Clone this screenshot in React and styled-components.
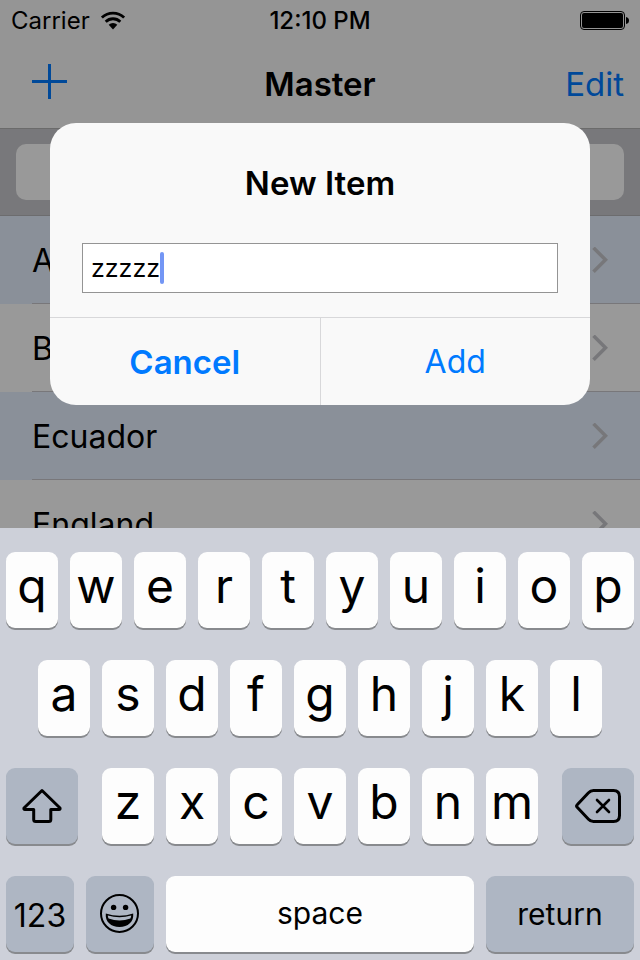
import React, { useState } from "react";
import styled, { createGlobalStyle } from "styled-components";

const GlobalStyle = createGlobalStyle`
  *, *::before, *::after { box-sizing: border-box; }
  body {
    margin: 0;
    font-family: Inter, "Liberation Sans", sans-serif;
    color: #000;
  }
  button, input { font: inherit; color: inherit; }
  button { border: 0; padding: 0; background: none; cursor: pointer; }
`;

const Screen = styled.div`
  display: flex;
  flex-direction: column;
  height: 100vh;
  overflow: hidden;
  background: #fff;
`;

const Stage = styled.div`
  position: relative;
  flex: 1;
  min-height: 0;
  overflow: hidden;
`;

const TopBars = styled.header`
  background: #f8f8f8;
  border-bottom: 1px solid #b2b2b2;
`;

const StatusBar = styled.div`
  display: grid;
  grid-template-columns: 1fr auto 1fr;
  align-items: center;
  height: 40px;
  padding: 0 11px;
  font-size: 24px;
`;

const Carrier = styled.div`
  display: flex;
  align-items: center;
  gap: 11px;
`;

const Clock = styled.div`
  font-weight: 500;
`;

const BatteryIcon = styled.svg`
  justify-self: end;
`;

const NavBar = styled.div`
  display: grid;
  grid-template-columns: 1fr auto 1fr;
  align-items: center;
  height: 88px;
  padding: 0 16px;
`;

const NavTitle = styled.h1`
  margin: 0;
  font-size: 33px;
  font-weight: 600;
`;

const NavButton = styled.button`
  justify-self: end;
  color: #007aff;
  font-size: 33px;
  line-height: 40px;
`;

const AddButton = styled(NavButton)`
  justify-self: start;
  padding: 0 16px 5px;

  svg { display: block; }
`;

const SearchBar = styled.div`
  display: flex;
  padding: 15px 16px;
  background: #c9c9ce;
  border-bottom: 1px solid #b4b4b8;
`;

const SearchField = styled.input`
  flex: 1;
  height: 56px;
  border: 0;
  border-radius: 10px;
  padding: 0 16px;
  background: #fff;
  appearance: none;
  font-size: 28px;
`;

const List = styled.ul`
  list-style: none;
  margin: 0;
  padding: 0;
`;

const ListRow = styled.li`
  display: flex;
  height: 88px;
  padding-left: 32px;
  background: ${(p) => (p.$tinted ? "#e6f1ff" : "#fff")};
`;

const RowBody = styled.div`
  flex: 1;
  display: flex;
  align-items: center;
  justify-content: space-between;
  padding: 2px 32px 0 0;
  border-bottom: 1px solid #c8c7cc;
  font-size: 32px;
`;

const Backdrop = styled.div`
  position: absolute;
  inset: 0;
  display: flex;
  align-items: center;
  justify-content: center;
  padding: 0 50px;
  background: rgba(0, 0, 0, 0.4);
`;

const Dialog = styled.form`
  flex: 1;
  max-width: 540px;
  border-radius: 26px;
  overflow: hidden;
  background: #f9f9f9;
`;

const DialogTitle = styled.h2`
  margin: 0;
  padding: 40px 32px;
  font-size: 33px;
  line-height: 40px;
  font-weight: 600;
  text-align: center;
`;

const TextBox = styled.label`
  display: flex;
  align-items: center;
  height: 50px;
  margin: 0 32px 24px;
  padding: 0 8px;
  border: 1px solid #949494;
  background: #fff;
  cursor: text;
`;

const TextInput = styled.input`
  field-sizing: content;
  min-width: 1px;
  max-width: 100%;
  border: 0;
  padding: 0;
  outline: 0;
  background: none;
  caret-color: transparent;
  font-size: 25px;
`;

const Caret = styled.span`
  width: 4px;
  height: 32px;
  border-radius: 2px;
  background: #7396f5;
`;

const Actions = styled.div`
  display: flex;
  border-top: 1px solid #d8d8da;
`;

const ActionButton = styled.button`
  flex: 1;
  height: 87px;
  color: #007aff;
  font-size: ${(p) => (p.$strong ? 33 : 32)}px;
  font-weight: ${(p) => (p.$strong ? 600 : 400)};

  & + & { border-left: 1px solid #d8d8da; }
`;

const Keyboard = styled.div`
  display: flex;
  flex-direction: column;
  gap: 32px;
  padding: 24px 0 8px;
  background: #cdd0d9;
`;

const KeyRow = styled.div`
  display: flex;
  gap: 12px;
  padding: 0 calc(${(p) => p.$inset || "0%"} + 6px);
`;

const Key = styled.button`
  flex: 1;
  min-width: 0;
  height: 76px;
  padding-bottom: 8px;
  border-radius: 9px;
  background: #fdfdfd;
  box-shadow: 0 2px 0 #888a8e;
  font-size: 48px;
  font-weight: 400;
  line-height: 1;
`;

const WideKey = styled(Key)`
  padding-bottom: 2px;
  font-size: 30px;
`;

const FunctionKey = styled(WideKey)`
  flex: 0 0 ${(p) => p.$width};
  display: flex;
  align-items: center;
  justify-content: center;
  padding-bottom: 0;
  background: #aeb6c3;
`;

const NumbersKey = styled(FunctionKey)`
  padding-top: 4px;
  font-size: 32px;
`;

const LetterGroup = styled.div`
  flex: 1;
  display: flex;
  gap: 12px;
  margin: 0 12px;
`;

const WifiIcon = () => (
  <svg width="24" height="19" viewBox="0 0 24 19" fill="none" stroke="#000" strokeWidth="2.8" aria-hidden="true">
    <path d="M0.9 6.6A16 16 0 0 1 23.1 6.6" />
    <path d="M4.7 10.7A10.5 10.5 0 0 1 19.3 10.7" />
    <path d="M12 18.4L7.7 13.8A6.2 6.2 0 0 1 16.3 13.8Z" fill="#000" stroke="none" />
  </svg>
);

const Battery = () => (
  <BatteryIcon width="49" height="19" viewBox="0 0 49 19" role="img" aria-label="Battery full">
    <rect x="0.5" y="0.5" width="44" height="18" rx="3.5" fill="none" stroke="#000" />
    <rect x="2" y="2" width="41" height="15" rx="2" />
    <path d="M46 6Q49 6.5 49 9.5T46 13Z" />
  </BatteryIcon>
);

const PlusIcon = () => (
  <svg width="35" height="35" viewBox="0 0 35 35" stroke="currentColor" strokeWidth="3" aria-hidden="true">
    <path d="M17.5 0V35M0 17.5H35" />
  </svg>
);

const Chevron = () => (
  <svg width="16" height="28" viewBox="0 0 16 28" fill="none" stroke="#c7c7cc" strokeWidth="3.6" aria-hidden="true">
    <path d="M1.5 0.8L13.5 12.8L1.5 24.8" />
  </svg>
);

const ShiftIcon = () => (
  <svg width="40" height="36" viewBox="0 0 40 36" fill="none" stroke="#000" strokeWidth="3" strokeLinejoin="round" aria-hidden="true">
    <path d="M20 2.5L2 20Q1.5 21.5 3 21.5H11.7V31.5Q11.7 33.5 13.7 33.5H26.8Q28.8 33.5 28.8 31.5V21.5H37Q38.5 21.5 38 20Z" />
  </svg>
);

const DeleteIcon = () => (
  <svg width="46" height="34" viewBox="0 0 46 34" fill="none" stroke="#000" strokeWidth="3" strokeLinecap="round" strokeLinejoin="round" aria-hidden="true">
    <path d="M2.2 18.2Q1 17 2.2 15.8L13.5 3.8Q15.5 1.5 18.5 1.5H38.5Q44.5 1.5 44.5 7.5V26.5Q44.5 32.5 38.5 32.5H18.5Q15.5 32.5 13.5 30.2Z" />
    <path d="M22 11L34 23M34 11L22 23" strokeWidth="2.6" />
  </svg>
);

const EmojiIcon = () => (
  <svg width="40" height="40" viewBox="0 0 40 40" aria-hidden="true">
    <circle cx="19.5" cy="19.5" r="18.5" fill="none" stroke="#000" strokeWidth="2" />
    <circle cx="13.6" cy="13.4" r="2.7" />
    <circle cx="25.6" cy="13.4" r="2.7" />
    <path d="M5.8 19.6Q19.5 24 33.2 19.6C34 28 28 33 19.5 33S5 28 5.8 19.6Z" />
    <path d="M7.8 21.6Q19.5 24.8 31.2 21.6Q31.2 23.2 30.4 24.6Q19.5 28.6 8.6 24.6Q7.8 23.2 7.8 21.6Z" fill="#aeb6c3" />
  </svg>
);

const countries = [
  { name: "A", tinted: true },
  { name: "B", tinted: false },
  { name: "Ecuador", tinted: true },
  { name: "England", tinted: false },
];

const LetterKeys = ({ letters, onType }) =>
  letters.split("").map((letter) => (
    <Key key={letter} type="button" onClick={() => onType(letter)}>
      {letter}
    </Key>
  ));

export default function App() {
  const [text, setText] = useState("zzzzz");
  const type = (character) => setText((value) => value + character);

  return (
    <Screen>
      <GlobalStyle />
      <Stage>
        <TopBars>
          <StatusBar>
            <Carrier>
              Carrier
              <WifiIcon />
            </Carrier>
            <Clock>12:10 PM</Clock>
            <Battery />
          </StatusBar>
          <NavBar>
            <AddButton type="button" aria-label="Add item">
              <PlusIcon />
            </AddButton>
            <NavTitle>Master</NavTitle>
            <NavButton type="button">Edit</NavButton>
          </NavBar>
        </TopBars>
        <SearchBar>
          <SearchField type="search" aria-label="Search" />
        </SearchBar>
        <List>
          {countries.map(({ name, tinted }) => (
            <ListRow key={name} $tinted={tinted}>
              <RowBody>
                {name}
                <Chevron />
              </RowBody>
            </ListRow>
          ))}
        </List>
        <Backdrop>
          <Dialog role="dialog" aria-labelledby="dialog-title" onSubmit={(e) => e.preventDefault()}>
            <DialogTitle id="dialog-title">New Item</DialogTitle>
            <TextBox>
              <TextInput type="text" aria-label="Item name" value={text} onChange={(e) => setText(e.target.value)} />
              <Caret />
            </TextBox>
            <Actions>
              <ActionButton type="button" $strong>Cancel</ActionButton>
              <ActionButton type="submit">Add</ActionButton>
            </Actions>
          </Dialog>
        </Backdrop>
      </Stage>
      <Keyboard>
        <KeyRow>
          <LetterKeys letters="qwertyuiop" onType={type} />
        </KeyRow>
        <KeyRow $inset="5%">
          <LetterKeys letters="asdfghjkl" onType={type} />
        </KeyRow>
        <KeyRow>
          <FunctionKey type="button" $width="72px" aria-label="Shift">
            <ShiftIcon />
          </FunctionKey>
          <LetterGroup>
            <LetterKeys letters="zxcvbnm" onType={type} />
          </LetterGroup>
          <FunctionKey type="button" $width="72px" aria-label="Delete" onClick={() => setText((v) => v.slice(0, -1))}>
            <DeleteIcon />
          </FunctionKey>
        </KeyRow>
        <KeyRow>
          <NumbersKey type="button" $width="68px">123</NumbersKey>
          <FunctionKey type="button" $width="68px" aria-label="Emoji">
            <EmojiIcon />
          </FunctionKey>
          <WideKey type="button" onClick={() => type(" ")}>space</WideKey>
          <FunctionKey type="button" $width="148px">return</FunctionKey>
        </KeyRow>
      </Keyboard>
    </Screen>
  );
}
